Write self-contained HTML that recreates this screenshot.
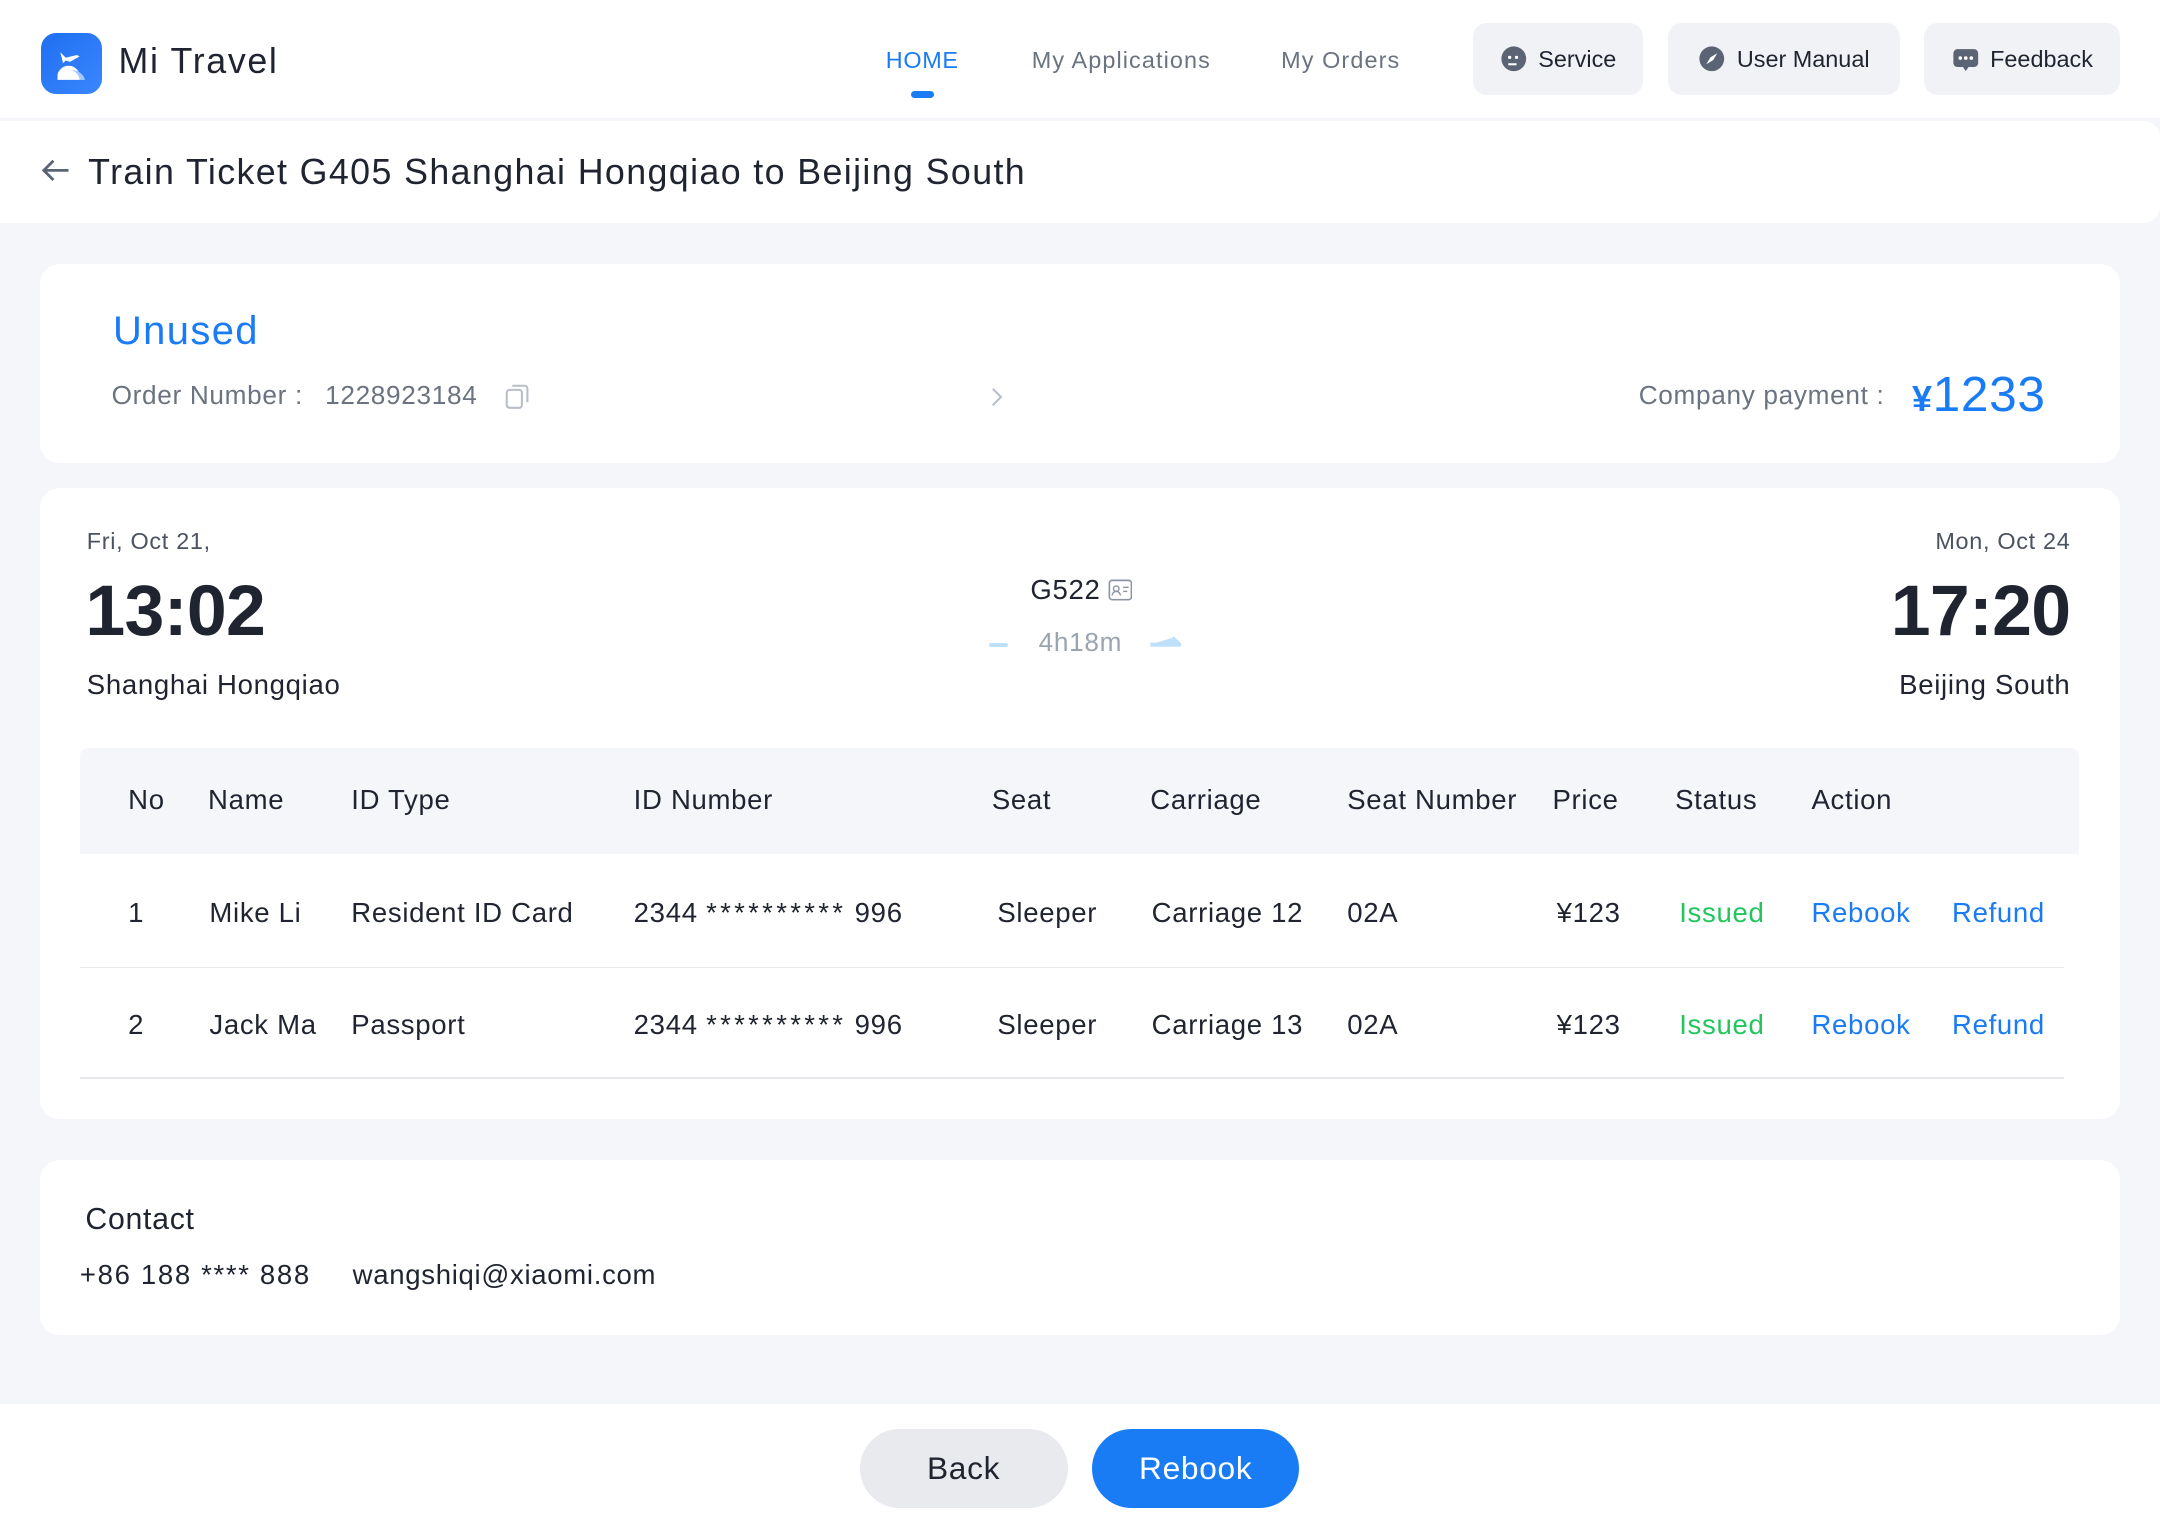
<!DOCTYPE html>
<html><head><meta charset="utf-8"><style>
*{margin:0;padding:0;box-sizing:border-box}
html,body{width:2160px;height:1532px;overflow:hidden;background:#f5f6fa}
#w{width:1568px;height:1112px;zoom:1.37755;position:relative;font-family:"Liberation Sans",sans-serif;color:#1f2430;background:#f5f6fa;letter-spacing:0.5px}
.a{position:absolute;white-space:nowrap}
.card{position:absolute;background:#fff;border-radius:14px}
.btn{position:absolute;top:17px;height:52px;background:#f1f2f6;border-radius:10px;font-size:17px;display:flex;align-items:center;justify-content:center;gap:8px;color:#1f2430;letter-spacing:0}
.th{top:581px;font-size:20px;transform:translateY(-50%);color:#1f2430}
.r{font-size:20px;transform:translateY(-50%)}
.g{color:#22c55e}.b{color:#1a7cf5}
.st{letter-spacing:0.5px}.st i{font-style:normal;letter-spacing:2.4px}
</style></head><body><div id="w">
<div class="a" style="left:0;top:0;width:1568px;height:86px;background:#fff"></div>
<div class="a" style="left:30px;top:24px;width:44px;height:44px;border-radius:11px;background:linear-gradient(135deg,#1f6ff0,#3a86ff)">
<svg width="44" height="44" viewBox="0 0 44 44"><path d="M14 14l4 4 8-2 2 1-7 4-3-1-2 2" fill="#fff"/><path d="M12 34v-4a8 8 0 0 1 16 4z" fill="#fff"/><path d="M22 27a10 10 0 0 1 10 7h-4a8 8 0 0 0-6-7z" fill="#aac8ff"/></svg></div>
<div class="a" style="left:86px;top:30px;font-size:26px;color:#1f2430;letter-spacing:1.2px">Mi Travel</div>
<div class="a b" style="left:643px;top:34px;font-size:17px">HOME</div>
<div class="a" style="left:661px;top:66px;width:17px;height:5px;border-radius:3px;background:#1a7cf5"></div>
<div class="a" style="left:749px;top:34px;font-size:17px;color:#6b7280;letter-spacing:0.8px">My Applications</div>
<div class="a" style="left:930px;top:34px;font-size:17px;color:#6b7280;letter-spacing:0.8px">My Orders</div>
<div class="btn" style="left:1069px;width:124px"><svg width="20" height="20" viewBox="0 0 20 20"><circle cx="10" cy="10" r="9" fill="#5b6475"/><circle cx="7" cy="9" r="1.2" fill="#fff"/><circle cx="12" cy="9" r="1.2" fill="#fff"/><path d="M6 14h6" stroke="#fff" stroke-width="1.5"/></svg>Service</div>
<div class="btn" style="left:1211px;width:168px"><svg width="20" height="20" viewBox="0 0 20 20"><circle cx="10" cy="10" r="9" fill="#5b6475"/><path d="M14 6l-3 5-5 3 3-5z" fill="#fff"/></svg>User Manual</div>
<div class="btn" style="left:1397px;width:142px"><svg width="20" height="20" viewBox="0 0 20 20"><rect x="1" y="3" width="18" height="13" rx="3" fill="#5b6475"/><path d="M8 16l2 3 2-3z" fill="#5b6475"/><circle cx="6" cy="9.5" r="1.3" fill="#fff"/><circle cx="10" cy="9.5" r="1.3" fill="#fff"/><circle cx="14" cy="9.5" r="1.3" fill="#fff"/></svg>Feedback</div>

<div class="a" style="left:0;top:88px;width:1568px;height:74px;background:#fff;border-radius:0 12px 12px 0"></div>
<svg class="a" style="left:30px;top:115px" width="22" height="18" viewBox="0 0 22 18"><path d="M20 9H3M9 2L2 9l7 7" fill="none" stroke="#5b6475" stroke-width="2"/></svg>
<div class="a" style="left:64px;top:110px;font-size:26px;letter-spacing:1.0px">Train Ticket G405 Shanghai Hongqiao to Beijing South</div>

<div class="card" style="left:29px;top:192px;width:1510px;height:144px"></div>
<div class="a b" style="left:82px;top:224px;font-size:29px;font-weight:500;letter-spacing:1px">Unused</div>
<div class="a" style="left:81px;top:276px;font-size:19px;color:#6b7280">Order Number :</div>
<div class="a" style="left:236px;top:276px;font-size:19px;color:#6b7280">1228923184</div>
<svg class="a" style="left:366px;top:278px" width="20" height="20" viewBox="0 0 20 20"><rect x="2" y="5" width="11" height="13" rx="2" fill="none" stroke="#b8bec8" stroke-width="1.5"/><path d="M6 2h9a2 2 0 0 1 2 2v10" fill="none" stroke="#b8bec8" stroke-width="1.5"/></svg>
<svg class="a" style="left:719px;top:280px" width="10" height="16" viewBox="0 0 10 16"><path d="M2 2l6 6-6 6" fill="none" stroke="#b8bec8" stroke-width="1.5"/></svg>
<div class="a" style="right:200px;top:276px;font-size:19px;color:#6b7280">Company payment :</div>
<div class="a b" style="right:83px;top:265px;font-size:36px;letter-spacing:0.5px"><span style="font-size:26px;font-weight:bold">¥</span>1233</div>

<div class="card" style="left:29px;top:354px;width:1510px;height:458px"></div>
<div class="a" style="left:63px;top:383px;font-size:17px;color:#4b5260">Fri, Oct 21,</div>
<div class="a" style="left:62px;top:414px;font-size:52px;font-weight:bold;letter-spacing:-0.5px">13:02</div>
<div class="a" style="left:63px;top:486px;font-size:20px">Shanghai Hongqiao</div>
<div class="a" style="right:65px;top:383px;font-size:17px;color:#4b5260">Mon, Oct 24</div>
<div class="a" style="right:65px;top:414px;font-size:52px;font-weight:bold;letter-spacing:-0.5px">17:20</div>
<div class="a" style="right:65px;top:486px;font-size:20px">Beijing South</div>
<div class="a" style="left:748px;top:417px;font-size:20px">G522</div>
<svg class="a" style="left:804px;top:420px" width="18" height="16" viewBox="0 0 18 16"><rect x="1" y="1" width="16" height="14" rx="2" fill="none" stroke="#8c94a3" stroke-width="1.2"/><circle cx="6" cy="7" r="2" fill="none" stroke="#8c94a3"/><path d="M3 12a3 3 0 0 1 6 0M11 6h4M11 9h3" fill="none" stroke="#8c94a3"/></svg>
<div class="a" style="left:754px;top:455px;font-size:19px;color:#9aa3b0">4h18m</div>
<div class="a" style="left:718px;top:467px;width:14px;height:3px;border-radius:2px;background:#bfe0fb"></div>
<svg class="a" style="left:834px;top:461px" width="24" height="10" viewBox="0 0 24 10"><path d="M1 7h21l-5-5" fill="#bfe0fb" stroke="#bfe0fb" stroke-width="3" stroke-linejoin="round"/></svg>

<div class="a" style="left:58px;top:543px;width:1451px;height:77px;background:#f4f6fa;border-radius:6px 6px 0 0"></div>
<div class="a th" style="left:93px">No</div><div class="a th" style="left:151px">Name</div><div class="a th" style="left:255px">ID Type</div><div class="a th" style="left:460px">ID Number</div><div class="a th" style="left:720px">Seat</div><div class="a th" style="left:835px">Carriage</div><div class="a th" style="left:978px">Seat Number</div><div class="a th" style="left:1127px">Price</div><div class="a th" style="left:1216px">Status</div><div class="a th" style="left:1315px">Action</div>

<div style="position:absolute;top:663px;left:0">
<div class="a r" style="left:93px">1</div><div class="a r" style="left:152px">Mike Li</div><div class="a r" style="left:255px">Resident ID Card</div><div class="a r st" style="left:460px">2344 <i>**********</i> 996</div><div class="a r" style="left:724px">Sleeper</div><div class="a r" style="left:836px">Carriage 12</div><div class="a r" style="left:978px">02A</div><div class="a r" style="left:1130px">¥123</div><div class="a r g" style="left:1219px">Issued</div><div class="a r b" style="left:1315px">Rebook</div><div class="a r b" style="left:1417px">Refund</div></div>
<div class="a" style="left:58px;top:702px;width:1440px;height:1px;background:#e6e8ec"></div>
<div style="position:absolute;top:744px;left:0">
<div class="a r" style="left:93px">2</div><div class="a r" style="left:152px">Jack Ma</div><div class="a r" style="left:255px">Passport</div><div class="a r st" style="left:460px">2344 <i>**********</i> 996</div><div class="a r" style="left:724px">Sleeper</div><div class="a r" style="left:836px">Carriage 13</div><div class="a r" style="left:978px">02A</div><div class="a r" style="left:1130px">¥123</div><div class="a r g" style="left:1219px">Issued</div><div class="a r b" style="left:1315px">Rebook</div><div class="a r b" style="left:1417px">Refund</div></div>
<div class="a" style="left:58px;top:782px;width:1440px;height:1px;background:#e6e8ec"></div>

<div class="card" style="left:29px;top:842px;width:1510px;height:127px"></div>
<div class="a" style="left:62px;top:873px;font-size:22px;font-weight:500">Contact</div>
<div class="a" style="left:58px;top:914px;font-size:20px;letter-spacing:1.2px">+86 188 **** 888</div>
<div class="a" style="left:256px;top:914px;font-size:20px">wangshiqi@xiaomi.com</div>

<div class="a" style="left:0;top:1019px;width:1568px;height:93px;background:#fff"></div>
<div class="a" style="left:624px;top:1037px;width:151px;height:58px;border-radius:29px;background:#e9eaee;font-size:23px;display:flex;align-items:center;justify-content:center">Back</div>
<div class="a" style="left:793px;top:1037px;width:150px;height:58px;border-radius:29px;background:#1a7cf5;color:#fff;font-size:23px;display:flex;align-items:center;justify-content:center">Rebook</div>
</div></body></html>
